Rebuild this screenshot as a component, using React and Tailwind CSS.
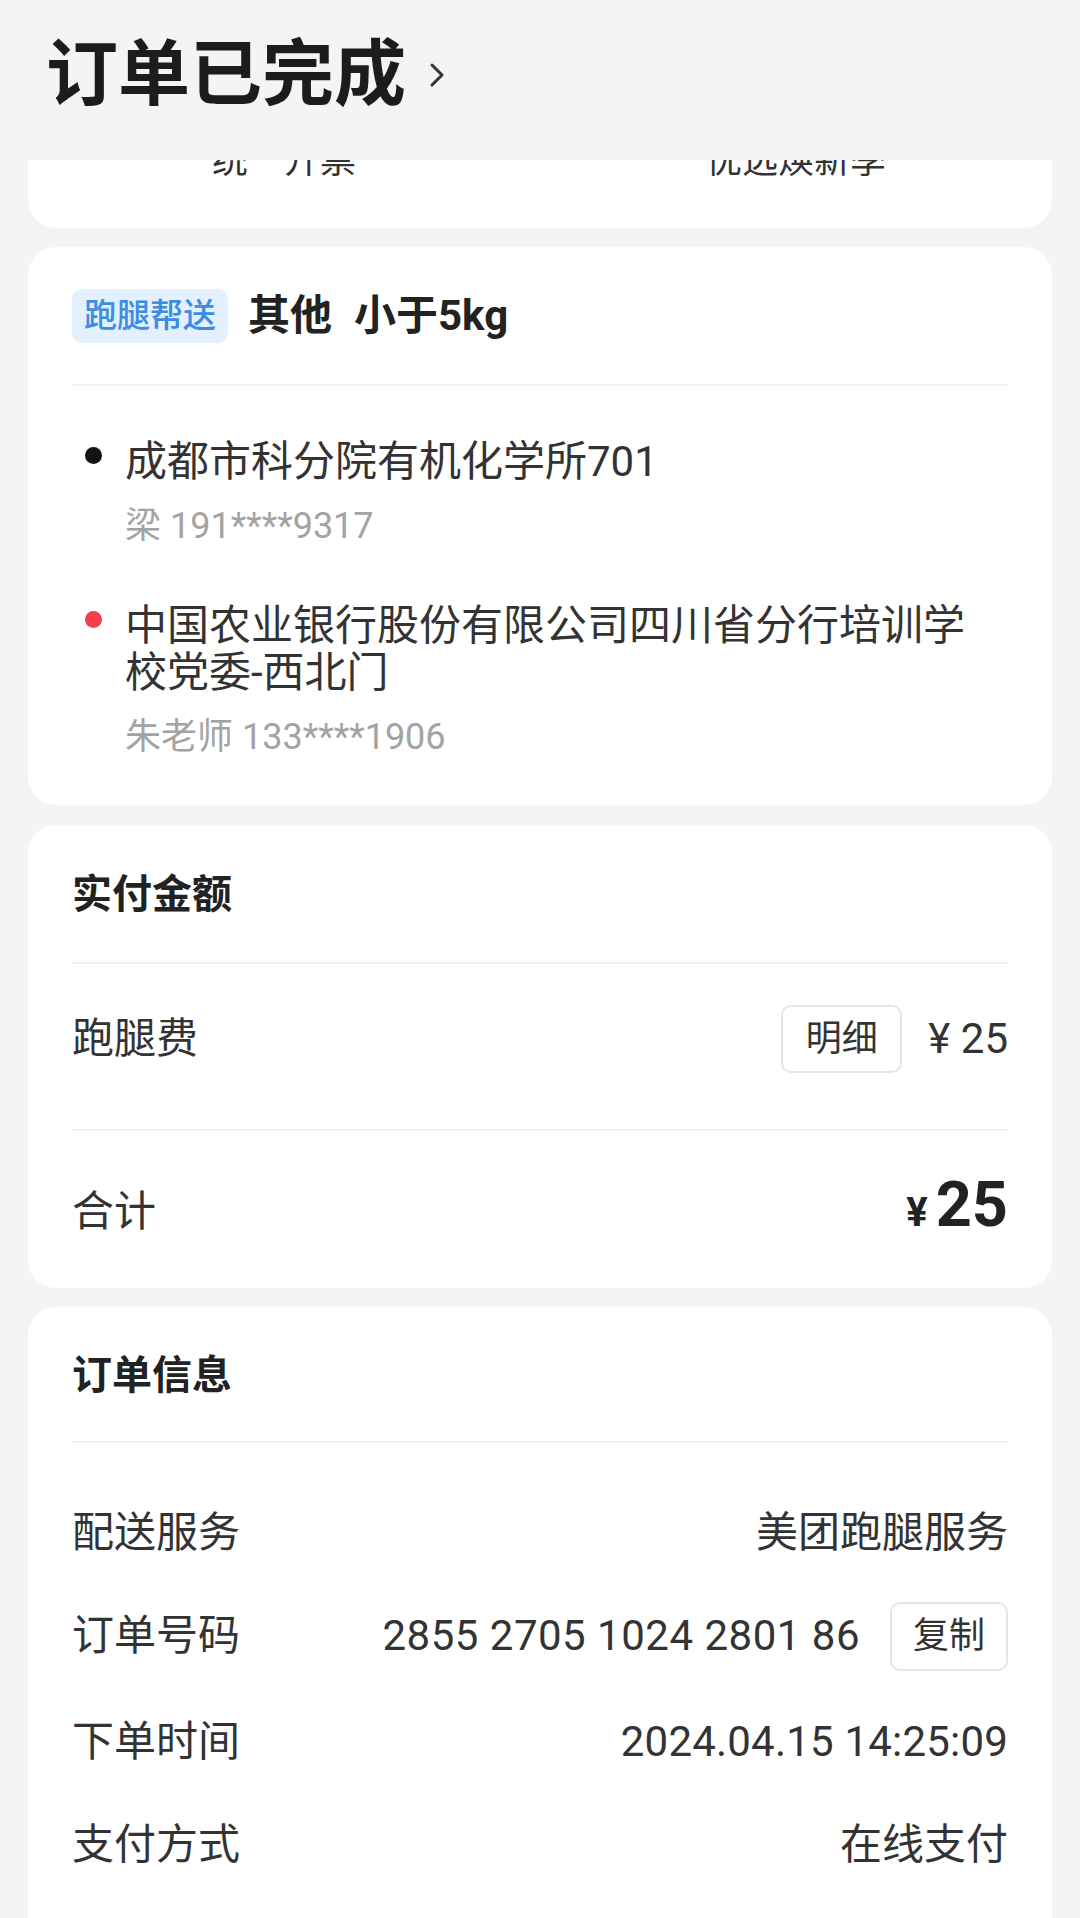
import React from "react";

function Divider({ className = "" }) {
  return <div className={"h-[2px] bg-[#f1f1f1] " + className} />;
}

function Dot({ color }) {
  return (
    <div className="w-[53px] shrink-0">
      <div className={"ml-[13px] mt-[9px] h-[17px] w-[17px] rounded-full " + color} />
    </div>
  );
}

function InfoRow({ label, children, className = "" }) {
  return (
    <div className={"flex h-[48px] items-center justify-between " + className}>
      <span className="text-[42px] leading-[48px] text-[#333]">{label}</span>
      <div className="flex items-center">{children}</div>
    </div>
  );
}

export default function App() {
  return (
    <div className="min-h-screen bg-[#f4f4f4] pb-[10px] font-['Roboto','Noto_Sans_CJK_SC',sans-serif] text-[#333]">
      {/* Header */}
      <div className="flex h-[160px] items-start pl-[46px] pt-[35px]">
        <h1 className="text-[72px] font-bold leading-[80px] text-[#1c1c1c]">订单已完成</h1>
        <svg className="ml-[22px] mt-[27px]" width="18" height="26" viewBox="0 0 18 26" fill="none">
          <polyline points="4,3 14,13 4,23" stroke="#333" strokeWidth="3" strokeLinecap="round" strokeLinejoin="round" />
        </svg>
      </div>

      {/* Partially hidden card (top scrolled under the header) */}
      <div className="mx-[28px] grid h-[68px] grid-cols-2 overflow-hidden rounded-b-[28px] bg-white">
        <div className="-mt-[17px] text-center text-[36px] leading-[36px] text-[#333]">统一开票</div>
        <div className="-mt-[17px] text-center text-[36px] leading-[36px] text-[#333]">优选焕新季</div>
      </div>

      {/* Route card */}
      <div className="mx-[28px] mt-[19px] rounded-[28px] bg-white px-[44px] pb-[46px] pt-[42px]">
        <div className="flex h-[54px] items-center">
          <span className="rounded-[10px] bg-[#e3f0fd] px-[12px] text-[33px] font-medium leading-[54px] text-[#3a8ce4]">跑腿帮送</span>
          <span className="ml-[20px] text-[42px] font-bold leading-[54px] text-[#222]">其他</span>
          <span className="ml-[22px] text-[42px] font-bold leading-[54px] text-[#222]">小于5kg</span>
        </div>
        <Divider className="mt-[41px]" />

        <div className="mt-[52px] flex">
          <Dot color="bg-[#141414]" />
          <div>
            <div className="text-[42px] leading-[47px] text-[#333]">成都市科分院有机化学所701</div>
            <div className="mt-[19px] text-[36px] leading-[44px] text-[#a3a3a3]">梁 191****9317</div>
          </div>
        </div>

        <div className="mt-[54px] flex">
          <Dot color="bg-[#f43f4e]" />
          <div className="max-w-[860px]">
            <div className="text-[42px] leading-[47px] text-[#333]">
              中国农业银行股份有限公司四川省分行培训学校党委-西北门
            </div>
            <div className="mt-[19px] text-[36px] leading-[44px] text-[#a3a3a3]">朱老师 133****1906</div>
          </div>
        </div>
      </div>

      {/* Payment card */}
      <div className="mx-[28px] mt-[20px] rounded-[28px] bg-white px-[44px] pb-[52px] pt-[46px]">
        <div className="text-[40px] font-bold leading-[48px] text-[#222]">实付金额</div>
        <Divider className="mt-[43px]" />
        <div className="mt-[41px] flex h-[68px] items-center justify-between">
          <span className="text-[42px] leading-[48px] text-[#333]">跑腿费</span>
          <div className="flex items-center">
            <div className="flex h-[68px] w-[121px] items-center justify-center rounded-[10px] border-2 border-[#e6e6e6] text-[36px] text-[#333]">
              明细
            </div>
            <span className="ml-[26px] text-[42px] leading-[48px] text-[#333]">¥ 25</span>
          </div>
        </div>
        <Divider className="mt-[56px]" />
        <div className="mt-[42px] flex items-baseline justify-between">
          <span className="text-[42px] leading-[48px] text-[#333]">合计</span>
          <div className="flex items-baseline">
            <span className="text-[40px] font-bold leading-none text-[#222]">¥</span>
            <span className="ml-[8px] text-[63px] font-bold leading-none text-[#222]">25</span>
          </div>
        </div>
      </div>

      {/* Order info card */}
      <div className="mx-[28px] mt-[19px] rounded-[28px] bg-white px-[44px] pb-[80px] pt-[45px]">
        <div className="text-[40px] font-bold leading-[48px] text-[#222]">订单信息</div>
        <Divider className="mt-[41px]" />
        <InfoRow label="配送服务" className="mt-[66px]">
          <span className="text-[42px] leading-[48px] text-[#333]">美团跑腿服务</span>
        </InfoRow>
        <InfoRow label="订单号码" className="mt-[55px]">
          <span className="text-[42px] leading-[48px] tracking-[0.5px] text-[#333]">2855 2705 1024 2801 86</span>
          <div className="ml-[30px] flex h-[69px] w-[118px] items-center justify-center rounded-[10px] border-2 border-[#e6e6e6] text-[36px] text-[#333]">
            复制
          </div>
        </InfoRow>
        <InfoRow label="下单时间" className="mt-[58px]">
          <span className="text-[42px] leading-[48px] tracking-[0.2px] text-[#333]">2024.04.15 14:25:09</span>
        </InfoRow>
        <InfoRow label="支付方式" className="mt-[55px]">
          <span className="text-[42px] leading-[48px] text-[#333]">在线支付</span>
        </InfoRow>
      </div>
    </div>
  );
}
